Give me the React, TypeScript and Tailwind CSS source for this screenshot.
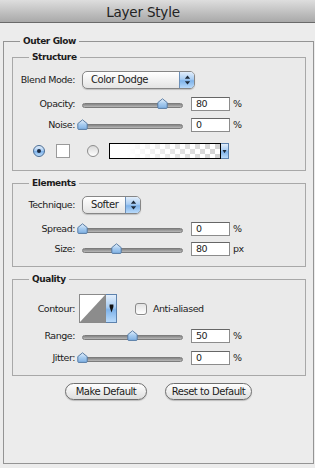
import { useId } from "react";

const font = "font-['Lucida_Grande','DejaVu_Sans',sans-serif]";

const aqua =
  "bg-[linear-gradient(to_bottom,#e2eefb_0%,#a9cdf3_45%,#7fb3ea_55%,#b9dafa_100%)]";

function Legend({ children }: { children: string }) {
  return (
    <legend className="ml-[16px] px-[3px] text-[9px] font-bold leading-[12px] tracking-[-0.4px] text-[#1c1c1c]">
      {children}
    </legend>
  );
}

function Label({ children }: { children: string }) {
  return <div className="w-[62px] shrink-0 text-right">{children}</div>;
}

function Slider({ pct }: { pct: number }) {
  const id = useId();
  return (
    <div className="relative h-[12px] w-[101px] shrink-0">
      <div className="absolute left-0 right-0 top-[5px] h-[5px] rounded-full border border-[#7c7c7c] bg-gradient-to-b from-[#858585] to-[#b9b9b9]" />
      <svg
        className="absolute top-0"
        style={{ left: `${pct}%`, marginLeft: -5.5 }}
        width="11"
        height="11"
        viewBox="0 0 11 11"
      >
        <defs>
          <linearGradient id={id} x1="0" y1="0" x2="0" y2="1">
            <stop offset="0" stopColor="#e6f1fc" />
            <stop offset="0.5" stopColor="#a6cbef" />
            <stop offset="1" stopColor="#7fb0e3" />
          </linearGradient>
        </defs>
        <path
          d="M5.5 0.8 L10.2 4.6 V9.6 Q10.2 10.4 9.4 10.4 H1.6 Q0.8 10.4 0.8 9.6 V4.6 Z"
          fill={`url(#${id})`}
          stroke="#4e739d"
          strokeWidth="0.9"
        />
      </svg>
    </div>
  );
}

function Field({ value }: { value: string }) {
  return (
    <div className="h-[14px] w-[39px] shrink-0 border border-[#8c8c8c] border-t-[#666] bg-white pl-[4px] leading-[12px]">
      {value}
    </div>
  );
}

function SliderRow({
  label,
  pct,
  value,
  unit,
  className,
}: {
  label: string;
  pct: number;
  value: string;
  unit: string;
  className: string;
}) {
  return (
    <div className={`flex h-[14px] items-center ${className}`}>
      <Label>{label}</Label>
      <div className="ml-[7px]">
        <Slider pct={pct} />
      </div>
      <div className="ml-[8px]">
        <Field value={value} />
      </div>
      <div className="ml-[3px]">{unit}</div>
    </div>
  );
}

function UpDown() {
  return (
    <svg width="7" height="10" viewBox="0 0 7 10">
      <path d="M3.5 0.5 L6.2 3.8 H0.8 Z" fill="#1d2a3a" />
      <path d="M3.5 9.5 L6.2 6.2 H0.8 Z" fill="#1d2a3a" />
    </svg>
  );
}

function Popup({ value, className }: { value: string; className: string }) {
  return (
    <div
      className={`flex h-[18px] shrink-0 overflow-hidden rounded-[5px] border border-[#868686] bg-gradient-to-b from-white to-[#e4e4e4] shadow-[0_1px_1px_rgba(0,0,0,0.18)] ${className}`}
    >
      <div className="flex-1 pl-[8px] text-[10px] leading-[16px]">{value}</div>
      <div
        className={`flex w-[15px] items-center justify-center border-l border-[#6b8fb8] ${aqua}`}
      >
        <UpDown />
      </div>
    </div>
  );
}

function Radio({ on }: { on: boolean }) {
  return on ? (
    <div
      className={`flex h-[12px] w-[12px] shrink-0 items-center justify-center rounded-full border border-[#4b6d94] ${aqua}`}
    >
      <div className="h-[4px] w-[4px] rounded-full bg-[#1b2b44]" />
    </div>
  ) : (
    <div className="h-[12px] w-[12px] shrink-0 rounded-full border border-[#8d8d8d] bg-gradient-to-b from-[#d9d9d9] to-white" />
  );
}

function Button({ children, className }: { children: string; className: string }) {
  return (
    <div
      className={`flex h-[17px] items-center justify-center rounded-full border border-[#6f6f6f] bg-gradient-to-b from-white to-[#dedede] text-[10px] shadow-[0_1px_1px_rgba(0,0,0,0.2)] ${className}`}
    >
      {children}
    </div>
  );
}

export default function App() {
  return (
    <div
      className={`h-[468px] w-[315px] overflow-hidden bg-[#ececec] text-[9.5px] leading-[12px] tracking-[-0.45px] text-[#1c1c1c] ${font}`}
    >
      {/* title bar */}
      <div className="flex h-[23px] items-center justify-center border-b border-[#6a6a6a] bg-gradient-to-b from-[#dedede] to-[#a9a9a9] pr-[29px] pt-[2px] text-[13.5px] tracking-[-0.2px] text-[#222]">
        Layer Style
      </div>

      <fieldset className="ml-[3px] mr-[1px] mt-[12px] h-[429px] border border-[#949494]">
        <Legend>Outer Glow</Legend>
        <div className="pl-[8px] pr-[7px]">
          {/* Structure */}
          <fieldset className="mt-[4px] border border-[#a8a8a8] bg-[#eaeaea]">
            <Legend>Structure</Legend>
            <div className="flex flex-col pb-[11px] pt-[8px]">
              <div className="flex h-[18px] items-center">
                <Label>Blend Mode:</Label>
                <Popup value="Color Dodge" className="ml-[7px] w-[113px]" />
              </div>
              <SliderRow label="Opacity:" pct={80} value="80" unit="%" className="mt-[8px]" />
              <SliderRow label="Noise:" pct={0} value="0" unit="%" className="mt-[7px]" />
              <div className="mt-[11px] flex h-[16px] items-center">
                <div className="ml-[20px]">
                  <Radio on />
                </div>
                <div className="ml-[11px] h-[14px] w-[14px] border border-[#9a9a9a] bg-white" />
                <div className="ml-[17px]">
                  <Radio on={false} />
                </div>
                <div className="ml-[10px] flex h-[16px]">
                  <div className="h-[16px] w-[112px] border border-black bg-[linear-gradient(to_right,#fff_15%,rgba(255,255,255,0.4)_60%,rgba(255,255,255,0)),repeating-conic-gradient(#d2d2d2_0_25%,#fff_0_50%)] [background-size:auto,10px_10px]" />
                  <div
                    className={`flex w-[8px] items-center justify-center border border-l-0 border-[#5d82ad] ${aqua}`}
                  >
                    <svg width="5" height="5" viewBox="0 0 5 5">
                      <path d="M0.5 1 H4.5 L2.5 4.2 Z" fill="#1d2a3a" />
                    </svg>
                  </div>
                </div>
              </div>
            </div>
          </fieldset>

          {/* Elements */}
          <fieldset className="mt-[6px] border border-[#a8a8a8] bg-[#eaeaea]">
            <Legend>Elements</Legend>
            <div className="flex flex-col pb-[10px] pt-[7px]">
              <div className="flex h-[18px] items-center">
                <Label>Technique:</Label>
                <Popup value="Softer" className="ml-[7px] w-[59px]" />
              </div>
              <SliderRow label="Spread:" pct={0} value="0" unit="%" className="mt-[8px]" />
              <SliderRow label="Size:" pct={34} value="80" unit="px" className="mt-[6px]" />
            </div>
          </fieldset>

          {/* Quality */}
          <fieldset className="mt-[6px] border border-[#a8a8a8] bg-[#eaeaea]">
            <Legend>Quality</Legend>
            <div className="flex flex-col pb-[10px] pt-[9px]">
              <div className="flex h-[29px] items-center">
                <Label>Contour:</Label>
                <div className="ml-[4px] flex h-[29px] w-[38px] shrink-0">
                  <div className="h-[29px] w-[27px] border border-[#8a8a8a] bg-white">
                    <svg width="25" height="27" viewBox="0 0 25 27" className="block">
                      <path d="M0 27 L25 0 V27 Z" fill="#8c8c8c" />
                    </svg>
                  </div>
                  <div
                    className={`flex w-[11px] items-center justify-center border border-l-0 border-[#5d82ad] ${aqua}`}
                  >
                    <svg width="5" height="9" viewBox="0 0 5 9">
                      <path d="M0.6 0.5 H4.4 V3 L2.5 8.5 L0.6 3 Z" fill="#111" />
                    </svg>
                  </div>
                </div>
                <div className="ml-[18px] h-[12px] w-[12px] shrink-0 rounded-[3px] border border-[#8a8a8a] bg-gradient-to-b from-[#e2e2e2] to-white shadow-[0_1px_0_rgba(255,255,255,0.6)]" />
                <div className="ml-[6px]">Anti-aliased</div>
              </div>
              <SliderRow label="Range:" pct={50} value="50" unit="%" className="mt-[6px]" />
              <SliderRow label="Jitter:" pct={0} value="0" unit="%" className="mt-[8px]" />
            </div>
          </fieldset>
        </div>

        <div className="mt-[7px] flex justify-center gap-[18px]">
          <Button className="w-[82px]">Make Default</Button>
          <Button className="w-[87px]">Reset to Default</Button>
        </div>
      </fieldset>
    </div>
  );
}
